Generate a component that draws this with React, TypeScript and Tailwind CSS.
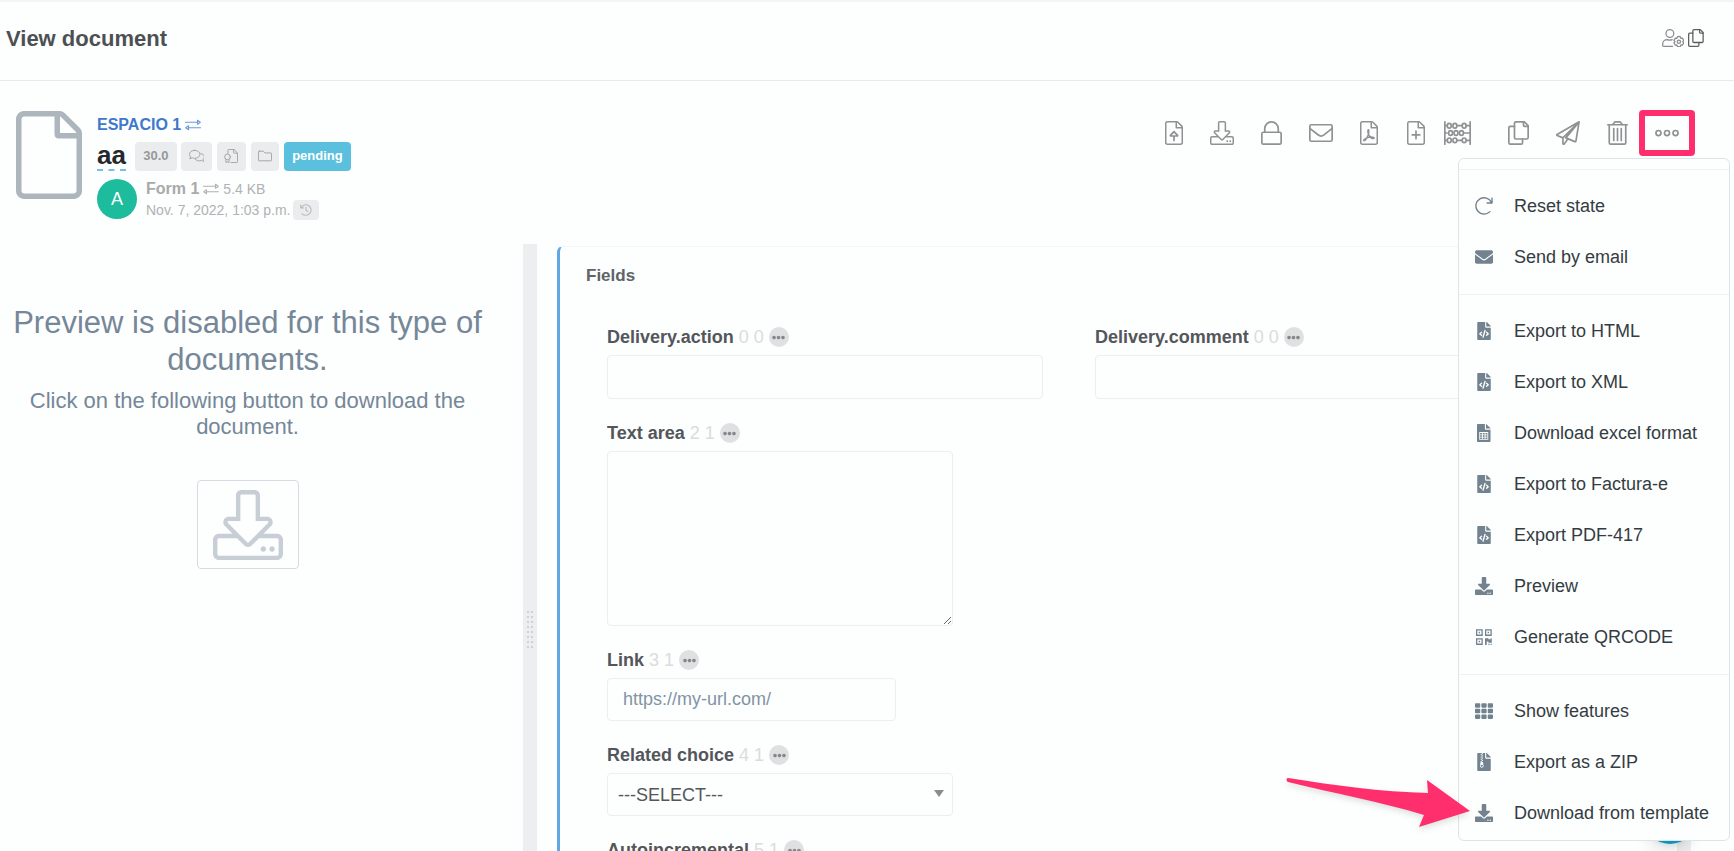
import React from 'react';
import { FaEnvelope, FaFileCode, FaDownload, FaTh, FaFileArchive, FaEllipsisH } from 'react-icons/fa';

interface IconProps {
  className?: string;
}

interface LineIconProps extends IconProps {
  box: string;
  children: React.ReactNode;
}

// Thin outline icons drawn on a 512 unit high grid
const LineIcon: React.FC<LineIconProps> = ({ box, className, children }) => (
  <svg
    viewBox={box}
    className={className}
    fill="none"
    stroke="currentColor"
    strokeWidth={36}
    strokeLinecap="round"
    strokeLinejoin="round"
    aria-hidden="true"
  >
    {children}
  </svg>
);

const FILE_PATH =
  'M369.9 97.9L286 14C277 5 264.8-.1 252.1-.1H48C21.5 0 0 21.5 0 48v416c0 26.5 21.5 48 48 48h288c26.5 0 48-21.5 48-48V131.9c0-12.7-5.1-25-14.1-34zm-22.6 22.7c2.1 2.1 3.5 4.6 4.2 7.4H256V32.5c2.8.7 5.3 2.1 7.4 4.2l83.9 83.9zM336 480H48c-8.8 0-16-7.2-16-16V48c0-8.8 7.2-16 16-16h176v104c0 13.3 10.7 24 24 24h104v304c0 8.8-7.2 16-16 16z';

const DOWNLOAD_PATH =
  'M452 432c0 11-9 20-20 20s-20-9-20-20 9-20 20-20 20 9 20 20zm-84-20c-11 0-20 9-20 20s9 20 20 20 20-9 20-20-9-20-20-20zm144-48v104c0 24.3-19.7 44-44 44H44c-24.3 0-44-19.7-44-44V364c0-24.3 19.7-44 44-44h99.4L87 263.6c-25.2-25.2-7.3-68.3 28.3-68.3H168V40c0-22.1 17.9-40 40-40h96c22.1 0 40 17.9 40 40v155.3h52.7c35.6 0 53.4 43.1 28.3 68.3L368.6 320H468c24.3 0 44 19.7 44 44zm-261.7 17.7c3.1 3.1 8.2 3.1 11.3 0L402.3 241c5-5 1.5-13.7-5.7-13.7H312V40c0-4.4-3.6-8-8-8h-96c-4.4 0-8 3.6-8 8v187.3h-84.7c-7.1 0-10.7 8.6-5.7 13.7l140.7 140.7zM480 364c0-6.6-5.4-12-12-12H336.6l-52.3 52.3c-15.6 15.6-41 15.6-56.6 0L175.4 352H44c-6.6 0-12 5.4-12 12v104c0 6.6 5.4 12 12 12h424c6.6 0 12-5.4 12-12V364z';

const FileIcon: React.FC<IconProps & { children?: React.ReactNode }> = ({ className, children }) => (
  <LineIcon box="0 0 384 512" className={className}>
    <path d={FILE_PATH} fill="currentColor" stroke="none" />
    {children}
  </LineIcon>
);

const FileUploadIcon: React.FC<IconProps> = ({ className }) => (
  <FileIcon className={className}>
    <path d="M192 226l-76 82q-6 12 8 12h136q14 0 8-12zM192 320v96" />
  </FileIcon>
);

const FilePdfIcon: React.FC<IconProps> = ({ className }) => (
  <FileIcon className={className}>
    <path
      strokeWidth={32}
      d="M174 192c-16 24-2 88 24 124 26 36 72 66 98 54 20-12-22-34-78-26-56 8-130 40-138 68 0 22 40-4 68-52 28-50 46-118 40-156-2-16-8-20-14-12z"
    />
  </FileIcon>
);

const FilePlusIcon: React.FC<IconProps> = ({ className }) => (
  <FileIcon className={className}>
    <path d="M192 216v160M112 296h160" />
  </FileIcon>
);

const DownloadIcon: React.FC<IconProps> = ({ className }) => (
  <svg viewBox="0 0 512 512" className={className} fill="currentColor" aria-hidden="true">
    <path d={DOWNLOAD_PATH} />
  </svg>
);

const LockIcon: React.FC<IconProps> = ({ className }) => (
  <LineIcon box="0 0 448 512" className={className}>
    <rect x="18" y="240" width="412" height="254" rx="32" />
    <path d="M80 240v-78a144 144 0 0 1 288 0v78" />
  </LineIcon>
);

const EnvelopeIcon: React.FC<IconProps> = ({ className }) => (
  <LineIcon box="0 0 512 512" className={className}>
    <rect x="18" y="80" width="476" height="352" rx="32" />
    <path d="M18 156l174 138c44 36 84 36 128 0l174-138" />
  </LineIcon>
);

const AbacusIcon: React.FC<IconProps> = ({ className }) => (
  <LineIcon box="0 0 576 512" className={className}>
    <path d="M18 18v476M558 18v476M18 100h46M280 100h100M480 100h78M18 256h46M428 256h130M18 412h46M280 412h100M480 412h78" />
    {[100, 412].map((y) => (
      <g key={y}>
        <ellipse cx="112" cy={y} rx="42" ry="50" />
        <ellipse cx="232" cy={y} rx="42" ry="50" />
        <ellipse cx="430" cy={y} rx="42" ry="50" />
      </g>
    ))}
    {[140, 256, 372].map((x) => (
      <ellipse key={x} cx={x} cy="256" rx="42" ry="50" />
    ))}
  </LineIcon>
);

const CopyIcon: React.FC<IconProps> = ({ className }) => (
  <LineIcon box="0 0 448 512" className={className}>
    <path d="M170 18h180l80 80v254a32 32 0 0 1-32 32H170a32 32 0 0 1-32-32V50a32 32 0 0 1 32-32z" />
    <path d="M330 18v72a24 24 0 0 0 24 24h76" />
    <path d="M138 114H50a32 32 0 0 0-32 32v316a32 32 0 0 0 32 32h228a32 32 0 0 0 32-32v-78" />
  </LineIcon>
);

const PlaneIcon: React.FC<IconProps> = ({ className }) => (
  <LineIcon box="0 0 512 512" className={className}>
    <path d="M492 18L24 286c-12 8-10 18 2 24l122 50L492 18l-66 408c-2 14-14 20-26 14l-190-80L492 18M148 360v118c0 18 20 24 30 10l70-100" />
  </LineIcon>
);

const TrashIcon: React.FC<IconProps> = ({ className }) => (
  <LineIcon box="0 0 448 512" className={className}>
    <path d="M18 80h412M48 80v382a32 32 0 0 0 32 32h288a32 32 0 0 0 32-32V80M120 80l36-50q8-12 24-12h88q16 0 24 12l36 50M144 160v256M224 160v256M304 160v256" />
  </LineIcon>
);

const EllipsisIcon: React.FC<IconProps> = ({ className }) => (
  <LineIcon box="0 0 512 512" className={className}>
    {[74, 256, 438].map((x) => (
      <circle key={x} cx={x} cy="256" r="54" />
    ))}
  </LineIcon>
);

const ExchangeIcon: React.FC<IconProps> = ({ className }) => (
  <LineIcon box="0 0 512 512" className={className}>
    <path d="M16 168h384M400 104v128l88-64zM496 344H112M112 280v128l-88-64z" />
  </LineIcon>
);

const CommentsIcon: React.FC<IconProps> = ({ className }) => (
  <LineIcon box="0 0 576 512" className={className}>
    <path d="M208 48c-106 0-192 66-192 148 0 36 16 68 44 94-6 26-20 46-40 62 40 0 74-12 100-30 28 12 58 18 88 18 106 0 192-64 192-144S314 48 208 48z" />
    <path d="M432 164c76 18 128 68 128 128 0 36-16 68-44 94 6 26 20 46 40 62-40 0-74-12-100-30-92 38-192 10-234-50" />
  </LineIcon>
);

const CertificateIcon: React.FC<IconProps> = ({ className }) => (
  <LineIcon box="0 0 512 512" className={className}>
    <path d="M144 160V48a32 32 0 0 1 32-32h190l130 130v318a32 32 0 0 1-32 32H256M352 16v112a24 24 0 0 0 24 24h112" />
    <circle cx="128" cy="288" r="104" />
    <path d="M72 384v112l56-32 56 32V384" />
  </LineIcon>
);

const FolderIcon: React.FC<IconProps> = ({ className }) => (
  <LineIcon box="0 0 512 512" className={className}>
    <path d="M48 80h146l64 64h206a32 32 0 0 1 32 32v224a32 32 0 0 1-32 32H48a32 32 0 0 1-32-32V112a32 32 0 0 1 32-32z" />
  </LineIcon>
);

const HistoryIcon: React.FC<IconProps> = ({ className }) => (
  <LineIcon box="0 0 512 512" className={className}>
    <path strokeWidth={46} d="M28 40v124h124M40 160a226 226 0 1 1 40 250M256 144v124l72 56" />
  </LineIcon>
);

const RedoIcon: React.FC<IconProps> = ({ className }) => (
  <LineIcon box="0 0 512 512" className={className}>
    <path strokeWidth={40} d="M484 32v140H344M470 160a232 232 0 1 0-46 256" />
  </LineIcon>
);

const UserCogIcon: React.FC<IconProps> = ({ className }) => (
  <LineIcon box="0 0 640 512" className={className}>
    <circle cx="224" cy="128" r="110" />
    <path d="M290 304c-50 20-94 20-142 0C76 304 18 360 18 432v30a32 32 0 0 0 32 32h250" />
    <path d="M480 212l44 14 12 40 44-8 40 66-30 36 30 36-40 66-44-8-12 40-44 14-44-14-12-40-44 8-40-66 30-36-30-36 40-66 44 8 12-40z" />
    <circle cx="480" cy="360" r="46" />
  </LineIcon>
);

const SheetIcon: React.FC<IconProps> = ({ className }) => (
  <svg viewBox="0 0 384 512" className={className} fill="currentColor" fillRule="evenodd" aria-hidden="true">
    <path d="M24 0h200v136c0 13 11 24 24 24h136v328c0 13-11 24-24 24H24c-13 0-24-11-24-24V24C0 11 11 0 24 0zm232 0h6l122 122v6H256zM64 224v224h256V224zm24 32h52v40H88zm78 0h52v40h-52zm78 0h52v40h-52zM88 320h52v40H88zm78 0h52v40h-52zm78 0h52v40h-52zM88 384h52v40H88zm78 0h52v40h-52zm78 0h52v40h-52z" />
  </svg>
);

const QrIcon: React.FC<IconProps> = ({ className }) => (
  <svg viewBox="0 0 448 512" className={className} fill="currentColor" fillRule="evenodd" aria-hidden="true">
    <path d="M0 32h192v192H0zm36 36v120h120V68zm40 40h40v40H76zM256 32h192v192H256zm36 36v120h120V68zm40 40h40v40h-40zM0 288h192v192H0zm36 36v120h120V324zm40 40h40v40H76zM256 288h96v32h64v-32h32v128H352v-32h-48v96h-48zM352 448h32v32h-32zm64 0h32v32h-32z" />
  </svg>
);

interface MenuItem {
  label: string;
  icon: React.FC<IconProps>;
}

const menuGroups: MenuItem[][] = [
  [
    { label: 'Reset state', icon: RedoIcon },
    { label: 'Send by email', icon: FaEnvelope }
  ],
  [
    { label: 'Export to HTML', icon: FaFileCode },
    { label: 'Export to XML', icon: FaFileCode },
    { label: 'Download excel format', icon: SheetIcon },
    { label: 'Export to Factura-e', icon: FaFileCode },
    { label: 'Export PDF-417', icon: FaFileCode },
    { label: 'Preview', icon: FaDownload },
    { label: 'Generate QRCODE', icon: QrIcon }
  ],
  [
    { label: 'Show features', icon: FaTh },
    { label: 'Export as a ZIP', icon: FaFileArchive },
    { label: 'Download from template', icon: FaDownload }
  ]
];

const ActionsMenu: React.FC = () => (
  <div className="absolute top-[77px] right-1 z-20 w-[272px] rounded-md border border-[#dde4e8] bg-[#fdfefe] pt-[10px] pb-[2px]">
    {menuGroups.map((group, index) => (
      <div key={index}>
        <hr className={`mb-[10px] border-[#edf1f1] ${index === 0 ? '' : 'mt-3'}`} />
        <ul>
          {group.map(({ label, icon: Icon }) => (
            <li key={label}>
              <button className="flex h-[51px] w-full items-center gap-[21px] px-4 text-left text-lg text-[#343c42]">
                <span className="flex w-[18px] justify-center text-[#73828f]">
                  <Icon className="h-[18px] w-auto" />
                </span>
                {label}
              </button>
            </li>
          ))}
        </ul>
      </div>
    ))}
    <svg
      viewBox="0 0 184 50"
      className="pointer-events-none absolute bottom-3 -left-[172px] h-[50px] w-[184px] overflow-visible drop-shadow-md"
      aria-hidden="true"
    >
      <path
        d="M1 0C45 7 95 14 141 15L140 2l43 31-51 16 5-12C95 24 45 15 1 4c-2-1-2-4 0-4z"
        fill="#ff2e6c"
      />
    </svg>
  </div>
);

const Toolbar: React.FC = () => (
  <div className="flex items-center gap-[27px] pt-[10px] text-[#8f9193]">
    <button aria-label="Upload file"><FileUploadIcon className="h-6 w-auto" /></button>
    <button aria-label="Download"><DownloadIcon className="h-6 w-auto" /></button>
    <button aria-label="Lock"><LockIcon className="h-6 w-auto" /></button>
    <button aria-label="Send email"><EnvelopeIcon className="h-6 w-auto" /></button>
    <button aria-label="Export PDF"><FilePdfIcon className="h-6 w-auto" /></button>
    <div className="mr-[10px] ml-[2px] flex gap-[19px]">
      <button aria-label="Add file"><FilePlusIcon className="h-6 w-auto" /></button>
      <button aria-label="Counters"><AbacusIcon className="h-6 w-auto" /></button>
    </div>
    <button aria-label="Copy"><CopyIcon className="h-6 w-auto" /></button>
    <button aria-label="Send"><PlaneIcon className="h-6 w-auto" /></button>
    <button aria-label="Delete"><TrashIcon className="h-6 w-auto" /></button>
    <button aria-label="More actions" className="relative">
      <EllipsisIcon className="h-6 w-auto" />
      <span className="absolute -inset-x-4 -inset-y-[11px] rounded-sm border-[6px] border-[#ff2e6c]" />
    </button>
  </div>
);

const DocumentHeader: React.FC = () => (
  <section className="relative flex items-start justify-between pt-[30px] pr-[55px] pb-6 pl-4">
    <div className="flex gap-[15px]">
      <FileIcon className="h-[88px] w-[66px] text-[#adb6bd]" />
      <div>
        <div className="flex h-7 items-center gap-1 font-bold text-[#3d79cc]">
          <a href="#espacio">ESPACIO 1</a>
          <ExchangeIcon className="h-4 w-4 text-[#6c9add]" />
        </div>
        <div className="flex h-[34px] items-center text-[13px] font-bold">
          <h2 className="mr-[9px] border-b-2 border-dashed border-[#74c0e6] text-[26px] leading-[28px] text-[#25292c]">aa</h2>
          <span className="mr-1 flex h-[29px] w-[42px] items-center justify-center rounded bg-[#ebecee] text-[#97999b]">30.0</span>
          <button aria-label="Comments" className="mr-[5px] flex h-[29px] w-[31px] items-center justify-center rounded bg-[#ebecee] text-[#a3a5a7]">
            <CommentsIcon className="h-[14px] w-auto" />
          </button>
          <button aria-label="Certificate" className="mr-[5px] flex h-[29px] w-[29px] items-center justify-center rounded bg-[#ebecee] text-[#a3a5a7]">
            <CertificateIcon className="h-[14px] w-auto" />
          </button>
          <button aria-label="Folder" className="mr-[5px] flex h-[29px] w-7 items-center justify-center rounded bg-[#ebecee] text-[#a3a5a7]">
            <FolderIcon className="h-[14px] w-auto" />
          </button>
          <span className="flex h-[29px] w-[67px] items-center justify-center rounded bg-[#5bc0de] text-white">pending</span>
        </div>
        <div className="mt-[6px] flex gap-[9px] text-[#b0b2b3]">
          <div className="flex h-10 w-10 items-center justify-center rounded-full bg-[#1cbc9c] text-lg text-white">A</div>
          <div>
            <div className="flex h-5 items-center gap-1">
              <span className="font-bold text-[#a8aaab]">Form 1</span>
              <ExchangeIcon className="h-4 w-4" />
              <span className="text-sm">5.4 KB</span>
            </div>
            <div className="flex h-[21px] items-center text-sm">
              <span>Nov. 7, 2022, 1:03 p.m.</span>
              <button aria-label="History" className="ml-[2px] flex h-5 w-[26px] items-center justify-center rounded bg-[#ebecee] text-[#b8babc]">
                <HistoryIcon className="h-3 w-3" />
              </button>
            </div>
          </div>
        </div>
      </div>
    </div>
    <Toolbar />
    <ActionsMenu />
  </section>
);

const Preview: React.FC = () => (
  <div className="w-[523px] shrink-0 pt-[60px] pr-7 text-center text-[#758798]">
    <h2 className="text-[31px] leading-[37px]">
      Preview is disabled for this type of
      <br />
      documents.
    </h2>
    <p className="mt-[10px] px-5 text-[22px] leading-[26px]">Click on the following button to download the document.</p>
    <button
      aria-label="Download document"
      className="mt-10 inline-flex h-[89px] w-[102px] items-center justify-center rounded border border-[#d5dce1] text-[#c8ced5]"
    >
      <DownloadIcon className="h-[70px] w-[70px]" />
    </button>
  </div>
);

const Splitter: React.FC<{ grip?: boolean }> = ({ grip }) => (
  <div className="w-[14px] shrink-0 bg-[#edeef0]">
    {grip && (
      <div className="mx-auto mt-[367px] grid w-[6px] grid-cols-2 gap-x-[2px] gap-y-[3px]">
        {Array.from({ length: 16 }, (_, i) => (
          <span key={i} className="h-[2px] w-[2px] bg-[#cfd1d3]" />
        ))}
      </div>
    )}
  </div>
);

interface FieldProps {
  id: string;
  label: string;
  position: string;
  children?: React.ReactNode;
}

const Field: React.FC<FieldProps> = ({ id, label, position, children }) => (
  <div className="mb-[22px]">
    <div className="mb-[6px] flex h-6 items-center gap-[5px] text-lg">
      <label htmlFor={id} className="font-bold text-[#53565a]">{label}</label>
      <span className="text-[#dadcdd]">{position}</span>
      <button
        type="button"
        aria-label={`Options for ${label}`}
        className="flex h-5 w-5 items-center justify-center rounded-full bg-[#dfe0e2] text-[#85878a]"
      >
        <FaEllipsisH className="h-[13px] w-[13px]" />
      </button>
    </div>
    {children}
  </div>
);

const FieldsPanel: React.FC = () => (
  <div className="mx-5 mt-[2px] min-w-0 flex-1 rounded-tl-md border-t border-l-3 border-t-[#f3f6f6] border-l-[#5fa8e3] pt-[17px]">
    <h3 className="pl-[26px] text-[17px] leading-6 font-bold text-[#606468]">Fields</h3>
    <form className="mt-[37px] pr-[126px] pl-[47px]">
      <div className="grid grid-cols-2 gap-[52px]">
        <Field id="action" label="Delivery.action" position="0 0">
          <input id="action" type="text" className="block h-11 w-full rounded border border-[#ebefef] px-4 text-lg" />
        </Field>
        <Field id="comment" label="Delivery.comment" position="0 0">
          <input id="comment" type="text" className="block h-11 w-full rounded border border-[#ebefef] px-4 text-lg" />
        </Field>
      </div>
      <Field id="area" label="Text area" position="2 1">
        <textarea id="area" className="block h-[175px] w-[346px] rounded border border-[#ebefef] px-4 py-2 text-lg" />
      </Field>
      <Field id="link" label="Link" position="3 1">
        <input
          id="link"
          type="url"
          placeholder="https://my-url.com/"
          className="block h-[43px] w-[289px] rounded border border-[#ebefef] px-[15px] text-lg placeholder:text-[#8294a4]"
        />
      </Field>
      <Field id="choice" label="Related choice" position="4 1">
        <div className="relative w-[346px]">
          <select
            id="choice"
            className="block h-[43px] w-full appearance-none rounded border border-[#ebefef] bg-transparent px-[10px] text-lg text-[#53565a]"
          >
            <option>---SELECT---</option>
          </select>
          <svg viewBox="0 0 10 7" className="pointer-events-none absolute top-[17px] right-[9px] h-[7px] w-[10px]" aria-hidden="true">
            <path d="M0 0h10L5 7z" fill="#8a8c8e" />
          </svg>
        </div>
      </Field>
      <Field id="auto" label="Autoincremental" position="5 1">
        <input id="auto" type="text" className="block h-[43px] w-[289px] rounded border border-[#ebefef] px-4 text-lg" />
      </Field>
    </form>
  </div>
);

const App: React.FC = () => {
  return (
    <div className="relative flex h-screen flex-col overflow-hidden bg-[#fdfefe] font-['Liberation_Sans',Arial,sans-serif]">
      <header className="flex h-[81px] shrink-0 items-center justify-between border-t-2 border-b border-t-[#f2f5f4] border-b-[#e6eaea] pr-[30px] pb-[6px] pl-[6px]">
        <h1 className="text-[22px] font-bold text-[#4d5053]">View document</h1>
        <div className="flex items-center gap-1">
          <button aria-label="User settings" className="text-[#8b8d8f]"><UserCogIcon className="h-[18px] w-auto" /></button>
          <button aria-label="Copy document" className="text-[#5c5e60]"><CopyIcon className="h-[18px] w-auto" /></button>
        </div>
      </header>
      <DocumentHeader />
      <main className="flex min-h-0 flex-1">
        <Preview />
        <Splitter grip />
        <FieldsPanel />
        <Splitter />
        <div className="w-[43px] shrink-0" />
      </main>
      <button aria-label="Help" className="absolute right-9 bottom-[7px] h-14 w-14 rounded-full bg-[#0c94bd] shadow-lg" />
    </div>
  );
};

export default App;
